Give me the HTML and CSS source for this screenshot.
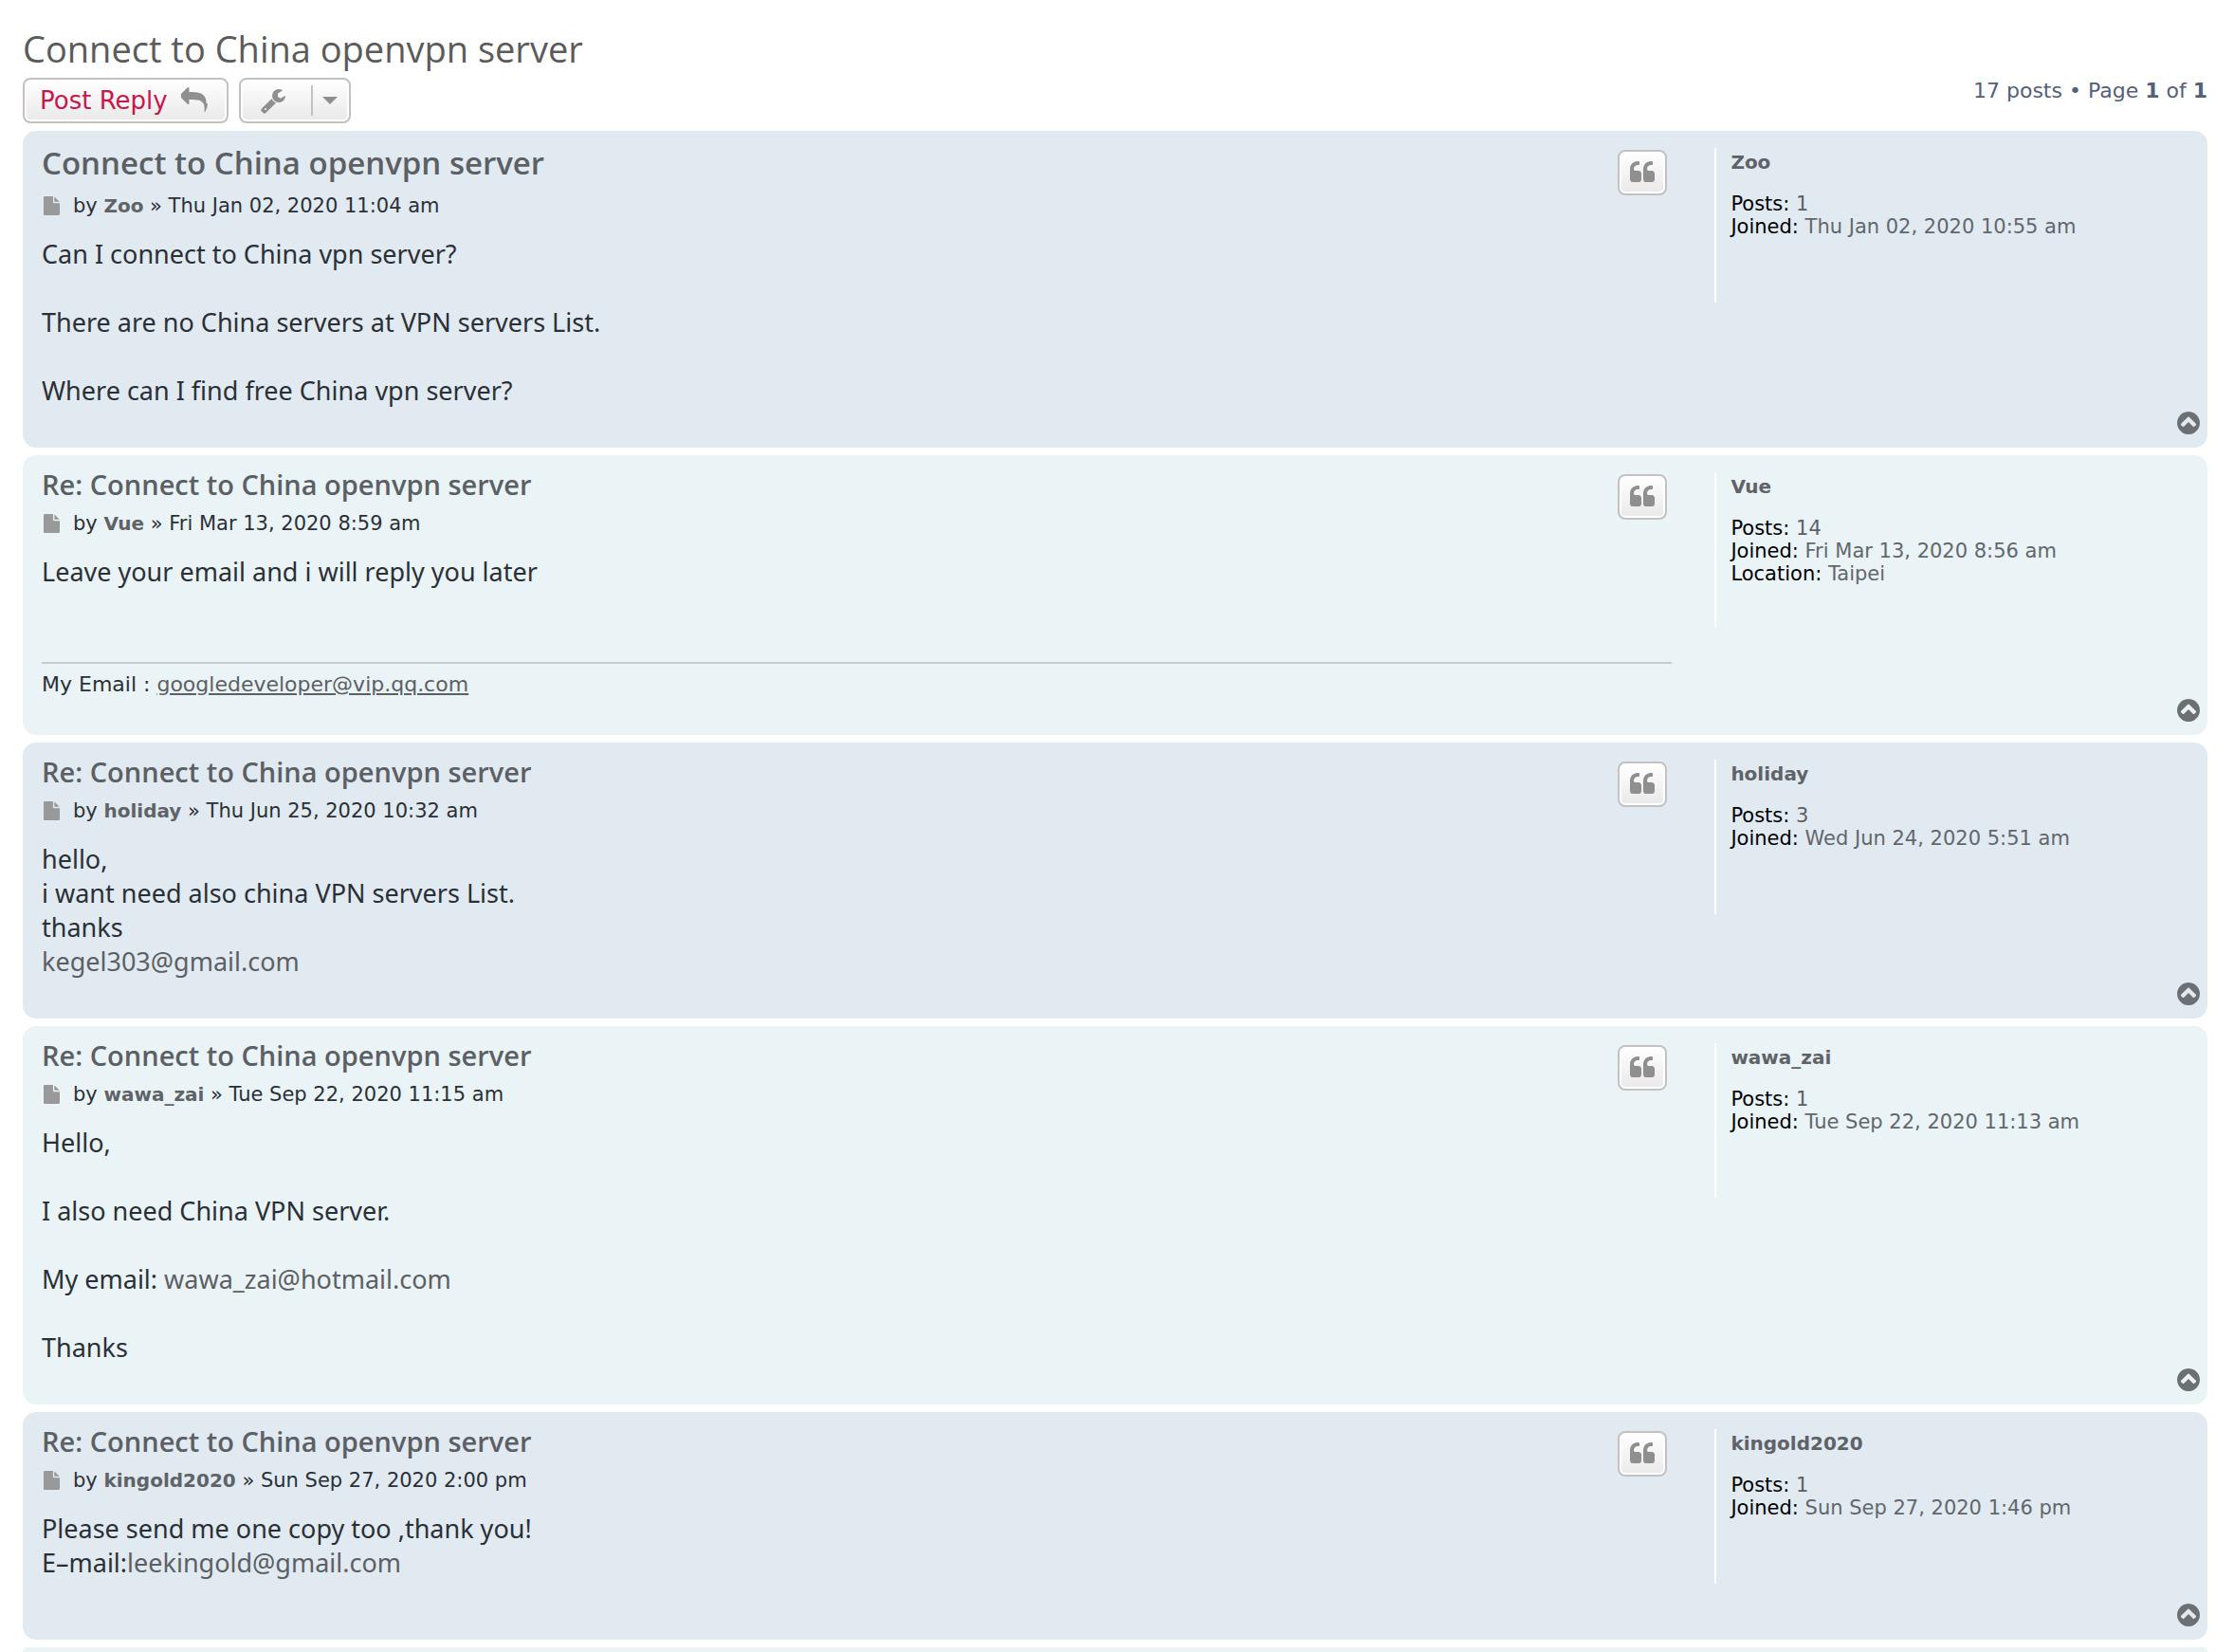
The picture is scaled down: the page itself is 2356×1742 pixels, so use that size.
FILE: index.html
```html
<!DOCTYPE html>
<html lang="en">

<head>
    <meta charset="UTF-8" />
    <meta name="viewport" content="width=device-width, initial-scale=1.0" />
    <title>Connect to China openvpn server</title>
    <link rel="stylesheet" href="styles.css">
</head>

<body>
    <!-- Icons -->
    <svg class="sprite" aria-hidden="true">
        <symbol id="reply" viewBox="0 0 1792 1792">
            <path d="M1792 1120q0 166-127 451-3 7-10.5 24t-13.5 30-13 22q-12 17-28 17-15 0-23.5-10t-8.5-25q0-9 2.5-26.5t2.5-23.5q5-68 5-123 0-112-19.5-200.5t-54-153.5-89-112-120-78.5-150.5-47.5-176.5-24-203-7h-224v256q0 26-19 45t-45 19-45-19l-512-512q-19-19-19-45t19-45l512-512q19-19 45-19t45 19 19 45v256h224q713 0 875 403 53 134 53 333z" />
        </symbol>
        <symbol id="wrench" viewBox="0 0 1792 1792">
            <path d="M448 1472q0-26-19-45t-45-19-45 19-19 45 19 45 45 19 45-19 19-45zm644-420l-682 682q-37 37-90 37-52 0-91-37l-106-108q-38-36-38-90 0-53 38-91l681-681q39 98 114.5 173.5t173.5 114.5zm634-435q0 39-23 106-47 134-164.5 217.5t-258.5 83.5q-185 0-316.5-131.5t-131.5-316.5 131.5-316.5 316.5-131.5q58 0 121.5 16.5t107.5 46.5q16 11 16 28t-16 28l-293 169v224l193 107q5-3 79-48.5t135.5-81 70.5-35.5q15 0 23.5 10t8.5 25z" />
        </symbol>
        <symbol id="quote" viewBox="0 0 1792 1792">
            <path d="M832 960v384q0 80-56 136t-136 56h-384q-80 0-136-56t-56-136v-704q0-104 40.5-198.5t109.5-163.5 163.5-109.5 198.5-40.5h64q26 0 45 19t19 45v128q0 26-19 45t-45 19h-64q-106 0-181 75t-75 181v32q0 40 28 68t68 28h224q80 0 136 56t56 136zm896 0v384q0 80-56 136t-136 56h-384q-80 0-136-56t-56-136v-704q0-104 40.5-198.5t109.5-163.5 163.5-109.5 198.5-40.5h64q26 0 45 19t19 45v128q0 26-19 45t-45 19h-64q-106 0-181 75t-75 181v32q0 40 28 68t68 28h224q80 0 136 56t56 136z" />
        </symbol>
        <symbol id="file" viewBox="128 0 1536 1792">
            <path d="M1152 512v-472q22 14 36 28l408 408q14 14 28 36h-472zm-128 32q0 40 28 68t68 28h544v1056q0 40-28 68t-68 28h-1344q-40 0-68-28t-28-68v-1600q0-40 28-68t68-28h800v544z" />
        </symbol>
        <symbol id="top" viewBox="128 128 1536 1536">
            <path d="M1293 1139l102-102q19-19 19-45t-19-45l-454-454q-19-19-45-19t-45 19l-454 454q-19 19-19 45t19 45l102 102q19 19 45 19t45-19l307-307 307 307q19 19 45 19t45-19zm371-243q0 209-103 385.5t-279.5 279.5-385.5 103-385.5-103-279.5-279.5-103-385.5 103-385.5 279.5-279.5 385.5-103 385.5 103 279.5 279.5 103 385.5z" />
        </symbol>
    </svg>

    <h2 class="topic-title"><a href="#">Connect to China openvpn server</a></h2>

    <div class="action-bar">
        <button class="button button-reply" type="button">Post Reply <svg class="icon"><use href="#reply" /></svg></button>
        <button class="button button-tools" type="button" aria-label="Topic tools">
            <svg class="icon"><use href="#wrench" /></svg>
            <span class="caret"></span>
        </button>
        <div class="pagination">17 posts • Page <strong>1</strong> of <strong>1</strong></div>
    </div>

    <article class="post bg2">
        <div class="inner">
            <div class="postbody">
                <div class="post-text">
                    <h3 class="first"><a href="#">Connect to China openvpn server</a></h3>
                    <p class="author"><svg class="file"><use href="#file" /></svg><span>by <a class="username" href="#">Zoo</a> » Thu Jan 02, 2020 11:04 am</span></p>
                    <div class="content">Can I connect to China vpn server?<br><br>There are no China servers at VPN servers List.<br><br>Where can I find free China vpn server?</div>
                </div>
                <button class="button button-quote" type="button" aria-label="Reply with quote"><svg class="icon"><use href="#quote" /></svg></button>
            </div>
            <dl class="postprofile">
                <dt><a class="username" href="#">Zoo</a></dt>
                <dd><strong>Posts:</strong> <a href="#">1</a></dd>
                <dd><strong>Joined:</strong> Thu Jan 02, 2020 10:55 am</dd>
            </dl>
        </div>
        <div class="back2top"><a href="#" aria-label="Top"><svg><use href="#top" /></svg></a></div>
    </article>

    <article class="post bg1">
        <div class="inner">
            <div class="postbody">
                <div class="post-text">
                    <h3><a href="#">Re: Connect to China openvpn server</a></h3>
                    <p class="author"><svg class="file"><use href="#file" /></svg><span>by <a class="username" href="#">Vue</a> » Fri Mar 13, 2020 8:59 am</span></p>
                    <div class="content">Leave your email and i will reply you later</div>
                </div>
                <button class="button button-quote" type="button" aria-label="Reply with quote"><svg class="icon"><use href="#quote" /></svg></button>
                <div class="signature">My Email : <a href="#">googledeveloper@vip.qq.com</a></div>
            </div>
            <dl class="postprofile">
                <dt><a class="username" href="#">Vue</a></dt>
                <dd><strong>Posts:</strong> <a href="#">14</a></dd>
                <dd><strong>Joined:</strong> Fri Mar 13, 2020 8:56 am</dd>
                <dd><strong>Location:</strong> Taipei</dd>
            </dl>
        </div>
        <div class="back2top"><a href="#" aria-label="Top"><svg><use href="#top" /></svg></a></div>
    </article>

    <article class="post bg2">
        <div class="inner">
            <div class="postbody">
                <div class="post-text">
                    <h3><a href="#">Re: Connect to China openvpn server</a></h3>
                    <p class="author"><svg class="file"><use href="#file" /></svg><span>by <a class="username" href="#">holiday</a> » Thu Jun 25, 2020 10:32 am</span></p>
                    <div class="content">hello,<br>i want need also china VPN servers List.<br>thanks<br><a href="#">kegel303@gmail.com</a></div>
                </div>
                <button class="button button-quote" type="button" aria-label="Reply with quote"><svg class="icon"><use href="#quote" /></svg></button>
            </div>
            <dl class="postprofile">
                <dt><a class="username" href="#">holiday</a></dt>
                <dd><strong>Posts:</strong> <a href="#">3</a></dd>
                <dd><strong>Joined:</strong> Wed Jun 24, 2020 5:51 am</dd>
            </dl>
        </div>
        <div class="back2top"><a href="#" aria-label="Top"><svg><use href="#top" /></svg></a></div>
    </article>

    <article class="post bg1">
        <div class="inner">
            <div class="postbody">
                <div class="post-text">
                    <h3><a href="#">Re: Connect to China openvpn server</a></h3>
                    <p class="author"><svg class="file"><use href="#file" /></svg><span>by <a class="username" href="#">wawa_zai</a> » Tue Sep 22, 2020 11:15 am</span></p>
                    <div class="content">Hello,<br><br>I also need China VPN server.<br><br>My email: <a href="#">wawa_zai@hotmail.com</a><br><br>Thanks</div>
                </div>
                <button class="button button-quote" type="button" aria-label="Reply with quote"><svg class="icon"><use href="#quote" /></svg></button>
            </div>
            <dl class="postprofile">
                <dt><a class="username" href="#">wawa_zai</a></dt>
                <dd><strong>Posts:</strong> <a href="#">1</a></dd>
                <dd><strong>Joined:</strong> Tue Sep 22, 2020 11:13 am</dd>
            </dl>
        </div>
        <div class="back2top"><a href="#" aria-label="Top"><svg><use href="#top" /></svg></a></div>
    </article>

    <article class="post bg2">
        <div class="inner">
            <div class="postbody">
                <div class="post-text">
                    <h3><a href="#">Re: Connect to China openvpn server</a></h3>
                    <p class="author"><svg class="file"><use href="#file" /></svg><span>by <a class="username" href="#">kingold2020</a> » Sun Sep 27, 2020 2:00 pm</span></p>
                    <div class="content">Please send me one copy too ,thank you!<br>E–mail:<a href="#">leekingold@gmail.com</a></div>
                </div>
                <button class="button button-quote" type="button" aria-label="Reply with quote"><svg class="icon"><use href="#quote" /></svg></button>
            </div>
            <dl class="postprofile">
                <dt><a class="username" href="#">kingold2020</a></dt>
                <dd><strong>Posts:</strong> <a href="#">1</a></dd>
                <dd><strong>Joined:</strong> Sun Sep 27, 2020 1:46 pm</dd>
            </dl>
        </div>
        <div class="back2top"><a href="#" aria-label="Top"><svg><use href="#top" /></svg></a></div>
    </article>

    <div class="next-post bg1"></div>
</body>

</html>
```
FILE: styles.css
```css
* {
    box-sizing: border-box;
}

body {
    margin: 0;
    padding: 24px 28px 0 24px;
    background: #fff;
    color: #2b3036;
    font-family: Verdana, "DejaVu Sans", sans-serif;
    font-size: 21px;
    line-height: 24px;
}

h2,
h3,
p,
dl,
dd {
    margin: 0;
}

a {
    color: #5c6064;
    text-decoration: none;
}

svg {
    display: block;
    fill: currentColor;
}

.sprite {
    position: absolute;
    width: 0;
    height: 0;
}

/* Topic header */
.topic-title {
    font-family: "Trebuchet MS", "Open Sans", sans-serif;
    font-size: 38px;
    font-weight: 400;
    line-height: 54px;
}

.topic-title a {
    color: #5b5b5b;
}

.action-bar {
    display: flex;
    gap: 11px;
    margin: 4px 0 8px;
}

.button {
    display: flex;
    align-items: center;
    height: 48px;
    padding: 0 16px;
    border: 2px solid #c4c2c0;
    border-radius: 8px;
    background: linear-gradient(#fff, #e9e9e9);
    box-shadow: inset 0 0 0 2px #fff;
    color: #8f8f8f;
    cursor: pointer;
}

.icon {
    width: 28px;
    height: 28px;
}

.button-reply {
    gap: 14px;
    padding-right: 20px;
    color: #c8174a;
    font-family: Verdana, "DejaVu Sans", sans-serif;
    font-size: 26px;
}

.button-reply .icon {
    color: #8f8f8f;
}

.button-tools {
    width: 118px;
    padding: 0 12px 0 20px;
    justify-content: space-between;
}

.caret {
    display: flex;
    align-items: center;
    height: 32px;
    padding-left: 10px;
    border-left: 2px solid #c4c2c0;
}

.caret::after {
    content: "";
    border: 8px solid transparent;
    border-top-color: #8f8f8f;
    border-bottom: 0;
}

.pagination {
    margin-left: auto;
    color: #536078;
    font-size: 22px;
    line-height: 28px;
}

/* Posts */
.post {
    margin-bottom: 8px;
    padding: 13px 8px 14px 20px;
    border-radius: 14px;
}

.bg1 {
    background: #eaf3f6;
}

.bg2 {
    background: #e1eaf1;
}

.inner {
    display: flex;
    justify-content: space-between;
    align-items: flex-start;
    padding-right: 14px;
}

.postbody {
    display: flex;
    flex-wrap: wrap;
    align-items: flex-start;
    width: 76%;
}

.post-text {
    flex: 1;
}

.button-quote {
    width: 52px;
    margin: 7px 5px 0 0;
    padding: 0;
    justify-content: center;
}

h3 {
    margin-bottom: 11px;
    font-family: "Trebuchet MS", "Open Sans", sans-serif;
    font-size: 29px;
    font-weight: 600;
    line-height: 36px;
}

h3.first {
    margin-bottom: 13px;
    font-size: 33px;
    line-height: 41px;
}

.author {
    display: flex;
    align-items: center;
    gap: 14px;
    margin-bottom: 21px;
}

.file {
    width: 17px;
    height: 20px;
    margin-left: 2px;
    color: #999;
}

.username {
    color: #5f6367;
    font-size: 20px;
    font-weight: 700;
}

.content {
    margin-bottom: 4px;
    font-family: "Lucida Grande", "Noto Sans", sans-serif;
    font-size: 27px;
    line-height: 36px;
}

.signature {
    width: 100%;
    margin-top: 73px;
    padding: 8px 0 1px;
    border-top: 2px solid #c6cacd;
    font-size: 22px;
    line-height: 28px;
}

.signature a {
    text-decoration: underline;
}

.postprofile {
    width: 22%;
    min-height: 163px;
    margin: 5px 0 21px;
    padding-left: 15px;
    border-left: 2px solid #fff;
    color: #62676c;
}

.postprofile dt {
    margin: 3px 0 20px;
}

.postprofile strong {
    color: #000;
    font-weight: 400;
}

.back2top {
    display: flex;
    justify-content: flex-end;
}

.back2top a {
    color: #6d7073;
}

.back2top svg {
    width: 24px;
    height: 24px;
}

.next-post {
    height: 5px;
    border-radius: 14px 14px 0 0;
}
```
